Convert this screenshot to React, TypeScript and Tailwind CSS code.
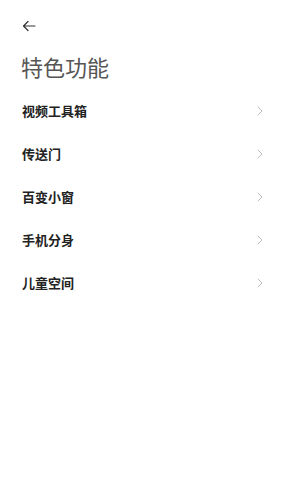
const items = ["视频工具箱", "传送门", "百变小窗", "手机分身", "儿童空间"];

const Chevron = () => (
  <svg width="6" height="10" viewBox="0 0 6 10" fill="none">
    <path d="M1 1l4 4-4 4" stroke="#bdbdbd" strokeWidth="1" strokeLinecap="round" strokeLinejoin="round" />
  </svg>
);

export default function App() {
  return (
    <div
      className="w-[281px] h-[500px] bg-white overflow-hidden"
      style={{ fontFamily: '"Noto Sans CJK SC", "Noto Sans", sans-serif' }}
    >
      <div className="pl-[22px] pt-[20px] h-[12px] box-content">
        <svg width="14" height="12" viewBox="0 0 14 12" fill="none">
          <path d="M13 6H1.5M6 1.5L1.5 6 6 10.5" stroke="#333" strokeWidth="1.2" strokeLinecap="round" strokeLinejoin="round" />
        </svg>
      </div>
      <h1 className="pl-[21px] mt-[20px] text-[22px] leading-[28px] text-[#555] font-normal">
        特色功能
      </h1>
      <ul className="mt-[9px]">
        {items.map((label) => (
          <li key={label} className="h-[43px] flex items-center justify-between pl-[22px] pr-[18px]">
            <span className="text-[13px] font-bold text-[#222]">{label}</span>
            <Chevron />
          </li>
        ))}
      </ul>
    </div>
  );
}
